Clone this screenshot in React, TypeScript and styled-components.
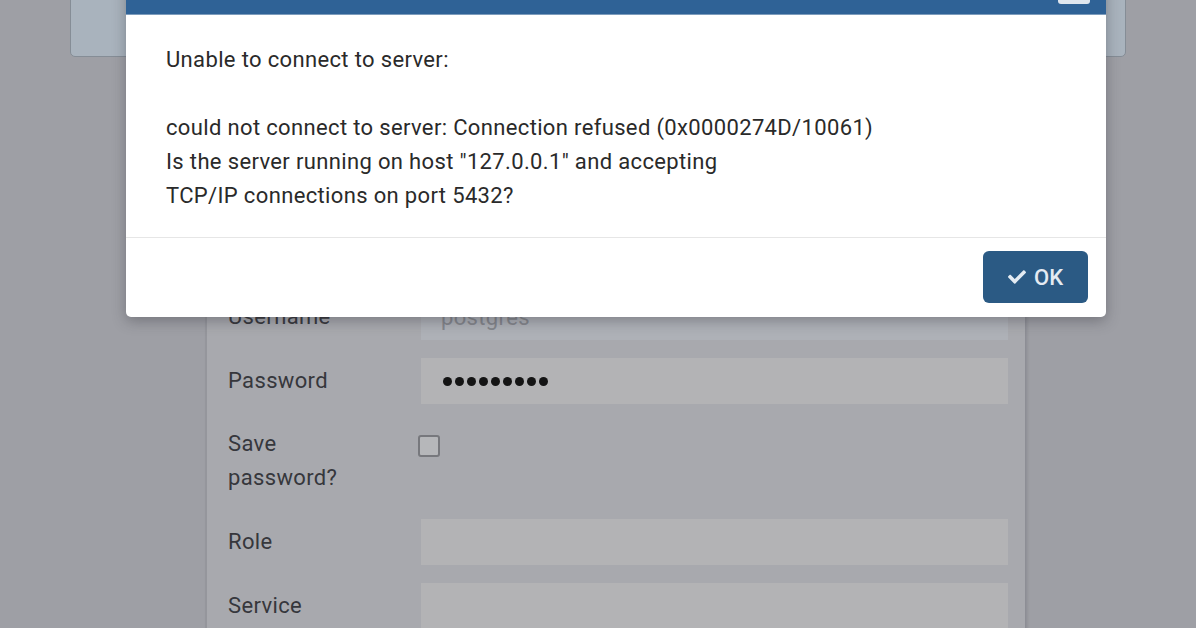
import { FC } from "react";
import styled, { createGlobalStyle } from "styled-components";
import { FaCheck } from "react-icons/fa";

const GlobalStyle = createGlobalStyle`
  html, body {
    margin: 0;
    padding: 0;
    background: #9e9fa5;
  }
  body {
    font-family: Roboto, "Noto Sans", "Liberation Sans", sans-serif;
  }
`;

interface FieldRow {
  label: string;
  value?: string;
  kind: "text" | "password" | "checkbox";
  muted?: boolean;
}

const rows: FieldRow[] = [
  { label: "Port", value: "5432", kind: "text" },
  { label: "Username", value: "postgres", kind: "text", muted: true },
  { label: "Password", value: "secret123", kind: "password" },
  { label: "Save password?", kind: "checkbox" },
  { label: "Role", kind: "text" },
  { label: "Service", kind: "text" },
];

const messageLines = [
  "Unable to connect to server:",
  "",
  "could not connect to server: Connection refused (0x0000274D/10061)",
  'Is the server running on host "127.0.0.1" and accepting',
  "TCP/IP connections on port 5432?",
];

const MaskedValue: FC<{ value: string }> = ({ value }) => (
  <Dots>
    {value.split("").map((_, i) => (
      <Dot key={i} />
    ))}
  </Dots>
);

const App: FC = () => {
  return (
    <Page>
      <GlobalStyle />
      <Backdrop>
        <AlertStrip />
        <FormPanel>
          {rows.map((row) => (
            <Row key={row.label} $tall={row.kind === "checkbox"}>
              <Label $wrap={row.kind === "checkbox"}>{row.label}</Label>
              {row.kind === "checkbox" ? (
                <CheckBox />
              ) : (
                <Input $muted={row.muted}>
                  {row.kind === "password" && row.value ? (
                    <MaskedValue value={row.value} />
                  ) : (
                    row.value
                  )}
                </Input>
              )}
            </Row>
          ))}
        </FormPanel>
      </Backdrop>

      <Dialog>
        <DialogHeader>
          <CloseButton />
        </DialogHeader>
        <DialogBody>
          {messageLines.map((line, i) => (
            <Line key={i}>{line || "\u00a0"}</Line>
          ))}
        </DialogBody>
        <DialogFooter>
          <OkButton>
            <FaCheck size={18} />
            OK
          </OkButton>
        </DialogFooter>
      </Dialog>
    </Page>
  );
};

export default App;

const Page = styled.div`
  position: relative;
  width: 1196px;
  height: 628px;
  overflow: hidden;
  background: #9e9fa5;
`;

const Backdrop = styled.div`
  display: flex;
  flex-direction: column;
  align-items: flex-start;
`;

const AlertStrip = styled.div`
  margin: -20px 0 0 70px;
  width: 1054px;
  height: 75px;
  background: #a9b3bd;
  border: 1px solid #858d96;
  border-radius: 5px;
`;

const FormPanel = styled.div`
  box-sizing: border-box;
  margin: 143px 0 0 205px;
  width: 820px;
  padding: 30px 17px 40px 21px;
  display: flex;
  flex-direction: column;
  gap: 18px;
  background: #a8a9ae;
  border-left: 2px solid #95969c;
  box-shadow: 2px 0 3px rgba(80, 80, 90, 0.25);
`;

const Row = styled.div<{ $tall?: boolean }>`
  display: grid;
  grid-template-columns: 193px 1fr;
  align-items: ${(p) => (p.$tall ? "start" : "center")};
  min-height: 46px;
  padding: ${(p) => (p.$tall ? "5px 0 6px" : "0")};
`;

const Label = styled.div<{ $wrap?: boolean }>`
  font-size: 22px;
  letter-spacing: 0.35px;
  line-height: 34px;
  color: #36373c;
  max-width: ${(p) => (p.$wrap ? "130px" : "none")};
`;

const Input = styled.div<{ $muted?: boolean }>`
  height: 46px;
  box-sizing: border-box;
  padding: 0 20px;
  display: flex;
  align-items: center;
  background: ${(p) => (p.$muted ? "#aeb1b7" : "#b3b3b5")};
  color: #84868c;
  font-size: 22px;
  letter-spacing: 0.35px;
`;

const Dots = styled.div`
  display: flex;
  gap: 3px;
  margin-left: 2px;
`;

const Dot = styled.span`
  width: 9px;
  height: 9px;
  border-radius: 50%;
  background: #141414;
`;

const CheckBox = styled.div`
  margin: 8px 0 0 -3px;
  width: 18px;
  height: 18px;
  border: 2px solid #77787d;
  border-radius: 3px;
  background: #b6b7ba;
`;

const Dialog = styled.div`
  position: absolute;
  left: 126px;
  top: -30px;
  width: 980px;
  background: #fff;
  border-radius: 5px;
  box-shadow: 0 4px 14px rgba(40, 40, 50, 0.35);
  display: flex;
  flex-direction: column;
`;

const DialogHeader = styled.div`
  height: 44px;
  background: #2f6296;
  border-bottom: 1px solid #7d9cbc;
  border-radius: 5px 5px 0 0;
  position: relative;
`;

const CloseButton = styled.div`
  position: absolute;
  right: 16px;
  top: 14px;
  width: 32px;
  height: 20px;
  border-radius: 3px;
  background: #dfe6ee;
`;

const DialogBody = styled.div`
  padding: 28px 40px 24px;
  border-bottom: 1px solid #e6e6e6;
`;

const Line = styled.div`
  font-size: 22px;
  letter-spacing: 0.35px;
  line-height: 34px;
  color: #2a2a2a;
`;

const DialogFooter = styled.div`
  display: flex;
  justify-content: flex-end;
  padding: 13px 18px 14px;
`;

const OkButton = styled.button`
  display: flex;
  align-items: center;
  justify-content: center;
  gap: 8px;
  width: 105px;
  height: 52px;
  border: none;
  border-radius: 6px;
  background: #2b5a84;
  color: #e4ebf2;
  font-family: Roboto, "Noto Sans", sans-serif;
  font-size: 22px;
  font-weight: 500;
  cursor: pointer;
`;
